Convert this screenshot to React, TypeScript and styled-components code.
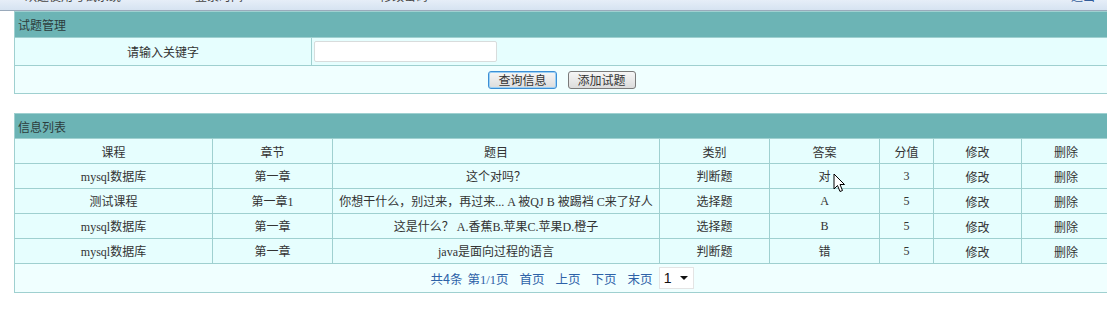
import React from "react";
import styled, { createGlobalStyle } from "styled-components";

const GlobalStyle = createGlobalStyle`
    html, body {
        margin: 0;
        padding: 0;
        background: #fff;
        overflow: hidden;
    }
    body {
        font-family: "Liberation Serif", "Noto Sans CJK SC", serif;
        font-size: 12px;
        color: #333;
    }
`;

const Page = styled.div`
    position: relative;
    width: 1107px;
    height: 313px;
    overflow: hidden;
`;

const TopBar = styled.div`
    height: 10px;
    border-bottom: 1px solid #9aaabb;
    background: linear-gradient(#e6eef8, #d6e3f1);
    overflow: hidden;
`;

const TopNav = styled.div`
    display: flex;
    align-items: center;
    margin-top: -12px;
    height: 14px;
    font-family: "Noto Sans CJK SC", sans-serif;
    font-size: 12px;
    color: #444;
`;

const TopItem = styled.span<{ left: number }>`
    margin-left: ${p => p.left}px;
    white-space: nowrap;
`;

const TopLink = styled.span`
    margin-left: auto;
    margin-right: 12px;
    color: #335c99;
    font-family: "Noto Sans CJK SC", sans-serif;
`;

const Main = styled.div`
    padding-left: 14px;
`;

const Panel = styled.table<{ gap?: number }>`
    width: 1096px;
    border-collapse: collapse;
    border: 1px solid #9fd0d0;
    margin-top: ${p => p.gap || 0}px;
    table-layout: fixed;
`;

const PanelHead = styled.td<{ h: number }>`
    height: ${p => p.h}px;
    padding: 0 0 0 3px;
    background: #6cb4b5;
    color: #2c3c3c;
    font-family: "Noto Sans CJK SC", sans-serif;
    font-size: 12px;
    text-align: left;
    border: 1px solid #9fd0d0;
`;

const Cell = styled.td<{ h?: number; tone?: "light" | "pale" }>`
    height: ${p => p.h || 24}px;
    padding: 0;
    text-align: center;
    border: 1px solid #9fd0d0;
    background: ${p => (p.tone === "pale" ? "#f0ffff" : "#e6fefe")};
    white-space: nowrap;
    overflow: hidden;
`;

const InputCell = styled(Cell)`
    text-align: left;
    padding-left: 2px;
`;

const KeywordInput = styled.input`
    display: block;
    box-sizing: border-box;
    width: 183px;
    height: 21px;
    border: 1px solid #d8dcdc;
    border-radius: 2px;
    background: #fff;
    outline: none;
`;

const ButtonRow = styled.div`
    display: flex;
    justify-content: center;
    gap: 11px;
`;

const Button = styled.button<{ focused?: boolean }>`
    box-sizing: border-box;
    height: 18px;
    padding: 0 9px;
    font-family: "Noto Sans CJK SC", sans-serif;
    font-size: 12px;
    line-height: 14px;
    color: #333;
    border: 1px solid ${p => (p.focused ? "#3c8fd6" : "#7a7a7a")};
    box-shadow: ${p => (p.focused ? "0 0 0 1px #9cd0f4 inset" : "none")};
    border-radius: 3px;
    background: linear-gradient(#f6f6f6, #dcdcdc);
`;

const ColHead = styled(Cell)`
    font-family: "Noto Sans CJK SC", sans-serif;
`;

const Pager = styled.div`
    display: flex;
    justify-content: center;
    align-items: center;
    gap: 11px;
    color: #2d62a8;
    font-family: "Noto Sans CJK SC", sans-serif;
    font-size: 12.5px;
`;

const PagerLink = styled.span<{ tight?: boolean }>`
    margin-left: ${p => (p.tight ? -6 : 0)}px;
`;

const Num = styled.span`
    font-family: "Liberation Serif", serif;
`;

const PageSelect = styled.div`
    display: flex;
    align-items: center;
    gap: 9px;
    box-sizing: border-box;
    height: 22px;
    padding: 0 5px 0 4px;
    margin-left: -5px;
    background: #fff;
    border: 1px solid #e4e4e4;
    color: #111;
    font-family: "Liberation Sans", sans-serif;
    font-size: 14px;
`;

const Caret = styled.span`
    width: 0;
    height: 0;
    border-left: 4px solid transparent;
    border-right: 4px solid transparent;
    border-top: 4px solid #111;
`;

const Pointer = styled.svg`
    position: absolute;
    left: 833px;
    top: 173px;
`;

const columns = [
    { name: "课程", width: 198 },
    { name: "章节", width: 120 },
    { name: "题目", width: 327 },
    { name: "类别", width: 110 },
    { name: "答案", width: 110 },
    { name: "分值", width: 54 },
    { name: "修改", width: 88 },
    { name: "删除", width: 89 },
];

const rows = [
    { course: "mysql数据库", chapter: "第一章", title: "这个对吗？", kind: "判断题", answer: "对", score: "3" },
    { course: "测试课程", chapter: "第一章1", title: "你想干什么，别过来，再过来... A 被QJ B 被踢裆  C来了好人", kind: "选择题", answer: "A", score: "5" },
    { course: "mysql数据库", chapter: "第一章", title: "这是什么？  A.香蕉B.苹果C.苹果D.橙子", kind: "选择题", answer: "B", score: "5" },
    { course: "mysql数据库", chapter: "第一章", title: "java是面向过程的语言", kind: "判断题", answer: "错", score: "5" },
];

export default function App() {
    return (
        <Page>
            <GlobalStyle />
            <TopBar>
                <TopNav>
                    <TopItem left={25}>欢迎使用考试系统</TopItem>
                    <TopItem left={74}>登录时间</TopItem>
                    <TopItem left={137}>修改密码</TopItem>
                    <TopLink>退出</TopLink>
                </TopNav>
            </TopBar>
            <Main>
                <Panel>
                    <colgroup>
                        <col style={{ width: 297 }} />
                        <col />
                    </colgroup>
                    <tbody>
                        <tr>
                            <PanelHead h={25} colSpan={2}>试题管理</PanelHead>
                        </tr>
                        <tr>
                            <Cell h={27}>请输入关键字</Cell>
                            <InputCell h={27}>
                                <KeywordInput type="text" />
                            </InputCell>
                        </tr>
                        <tr>
                            <Cell h={27} tone="pale" colSpan={2}>
                                <ButtonRow>
                                    <Button focused>查询信息</Button>
                                    <Button>添加试题</Button>
                                </ButtonRow>
                            </Cell>
                        </tr>
                    </tbody>
                </Panel>

                <Panel gap={19}>
                    <colgroup>
                        {columns.map(c => (
                            <col key={c.name} style={{ width: c.width }} />
                        ))}
                    </colgroup>
                    <tbody>
                        <tr>
                            <PanelHead h={24} colSpan={columns.length}>信息列表</PanelHead>
                        </tr>
                        <tr>
                            {columns.map(c => (
                                <ColHead key={c.name}>{c.name}</ColHead>
                            ))}
                        </tr>
                        {rows.map((r, i) => (
                            <tr key={i}>
                                <Cell>{r.course}</Cell>
                                <Cell>{r.chapter}</Cell>
                                <Cell>{r.title}</Cell>
                                <Cell>{r.kind}</Cell>
                                <Cell>{r.answer}</Cell>
                                <Cell>{r.score}</Cell>
                                <ColHead>修改</ColHead>
                                <ColHead>删除</ColHead>
                            </tr>
                        ))}
                        <tr>
                            <Cell h={28} tone="pale" colSpan={columns.length}>
                                <Pager>
                                    <PagerLink>共4条</PagerLink>
                                    <PagerLink tight>第<Num>1/1</Num>页</PagerLink>
                                    <PagerLink>首页</PagerLink>
                                    <PagerLink>上页</PagerLink>
                                    <PagerLink>下页</PagerLink>
                                    <PagerLink>末页</PagerLink>
                                    <PageSelect>
                                        1<Caret />
                                    </PageSelect>
                                </Pager>
                            </Cell>
                        </tr>
                    </tbody>
                </Panel>
            </Main>
            <Pointer width="14" height="21" viewBox="0 0 14 21">
                <path d="M1 1 L1 16 L4.5 12.5 L7 18.5 L9.5 17.5 L7 11.5 L11.5 11.5 Z" fill="#fff" stroke="#000" strokeWidth="1" strokeLinejoin="miter" />
            </Pointer>
        </Page>
    );
}
